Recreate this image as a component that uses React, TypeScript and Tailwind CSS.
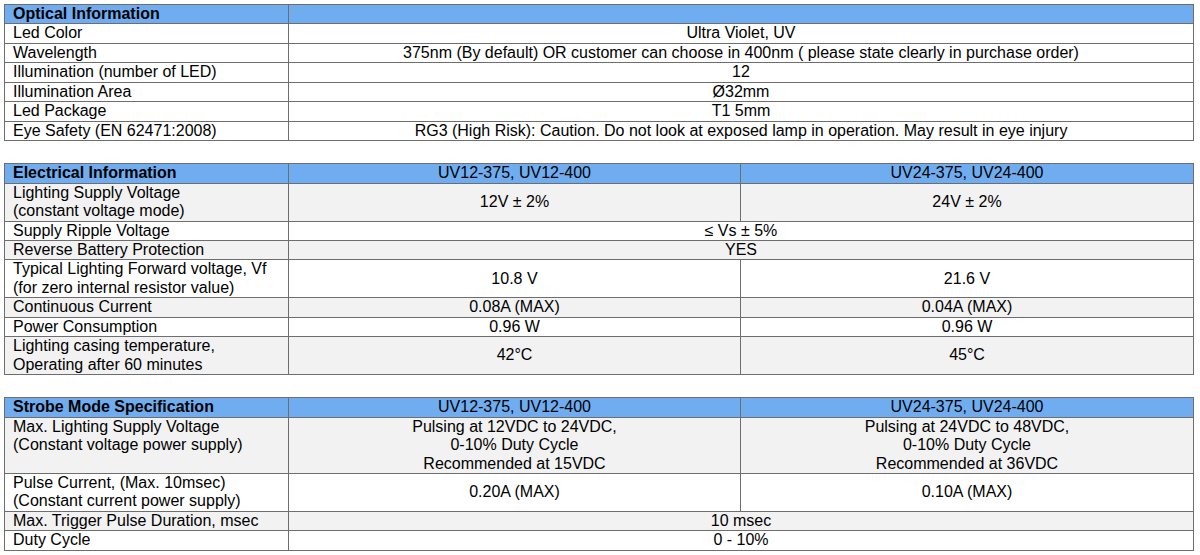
import type { ReactNode } from 'react'

type Row = {
  label: ReactNode
  values: ReactNode[] // one value spans both columns
  shade?: boolean
  labelTop?: boolean
}

const cell = 'border border-[#6e6e6e] px-2 py-0 text-[16px] leading-[18.45px] text-black'

const SpecTable = ({
  title,
  heads,
  rows
}: {
  title: string
  heads: string[]
  rows: Row[]
}) => (
  <table className="w-[1189px] table-fixed border-collapse">
    <colgroup>
      <col className="w-[284px]" />
      {heads.length === 2 ? (
        <>
          <col className="w-[452px]" />
          <col className="w-[453px]" />
        </>
      ) : (
        <col className="w-[905px]" />
      )}
    </colgroup>
    <thead>
      <tr className="bg-[#6fadf0]">
        <th className={`${cell} text-left font-bold`}>{title}</th>
        {heads.length === 0 ? (
          <th className={cell} />
        ) : (
          heads.map((h) => (
            <th key={h} className={`${cell} text-center font-normal`}>
              {h}
            </th>
          ))
        )}
      </tr>
    </thead>
    <tbody>
      {rows.map((r, i) => (
        <tr key={i} className={r.shade ? 'bg-[#f2f2f2]' : 'bg-white'}>
          <td className={`${cell} text-left ${r.labelTop ? 'align-top' : 'align-middle'}`}>{r.label}</td>
          {r.values.length === 1 ? (
            <td colSpan={heads.length === 2 ? 2 : 1} className={`${cell} text-center align-middle`}>
              {r.values[0]}
            </td>
          ) : (
            r.values.map((v, j) => (
              <td key={j} className={`${cell} text-center align-middle`}>
                {v}
              </td>
            ))
          )}
        </tr>
      ))}
    </tbody>
  </table>
)

const optical: Row[] = [
  { label: 'Led Color', values: ['Ultra Violet, UV'] },
  {
    label: 'Wavelength',
    values: ['375nm (By default) OR customer can choose in 400nm ( please state clearly in purchase order)']
  },
  { label: 'Illumination (number of LED)', values: ['12'] },
  { label: 'Illumination Area', values: ['Ø32mm'] },
  { label: 'Led Package', values: ['T1 5mm'] },
  {
    label: 'Eye Safety (EN 62471:2008)',
    values: ['RG3 (High Risk): Caution. Do not look at exposed lamp in operation. May result in eye injury']
  }
]

const electrical: Row[] = [
  {
    label: (
      <>
        Lighting Supply Voltage
        <br />
        (constant voltage mode)
      </>
    ),
    values: ['12V ± 2%', '24V ± 2%'],
    shade: true
  },
  { label: 'Supply Ripple Voltage', values: ['≤ Vs ± 5%'] },
  { label: 'Reverse Battery Protection', values: ['YES'], shade: true },
  {
    label: (
      <>
        Typical Lighting Forward voltage, Vf
        <br />
        (for zero internal resistor value)
      </>
    ),
    values: ['10.8 V', '21.6 V']
  },
  { label: 'Continuous Current', values: ['0.08A (MAX)', '0.04A (MAX)'], shade: true },
  { label: 'Power Consumption', values: ['0.96 W', '0.96 W'] },
  {
    label: (
      <>
        Lighting casing temperature,
        <br />
        Operating after 60 minutes
      </>
    ),
    values: ['42°C', '45°C'],
    shade: true
  }
]

const strobe: Row[] = [
  {
    label: (
      <>
        Max. Lighting Supply Voltage
        <br />
        (Constant voltage power supply)
      </>
    ),
    values: [
      <>
        Pulsing at 12VDC to 24VDC,
        <br />
        0-10% Duty Cycle
        <br />
        Recommended at 15VDC
      </>,
      <>
        Pulsing at 24VDC to 48VDC,
        <br />
        0-10% Duty Cycle
        <br />
        Recommended at 36VDC
      </>
    ],
    shade: true,
    labelTop: true
  },
  {
    label: (
      <>
        Pulse Current, (Max. 10msec)
        <br />
        (Constant current power supply)
      </>
    ),
    values: ['0.20A (MAX)', '0.10A (MAX)']
  },
  { label: 'Max. Trigger Pulse Duration, msec', values: ['10 msec'], shade: true },
  { label: 'Duty Cycle', values: ['0 - 10%'] }
]

export default function App() {
  return (
    <div className="w-[1200px] h-[555px] overflow-hidden bg-white pl-1 pt-1 font-['Liberation_Sans',Arial,sans-serif]">
      <div className="flex flex-col gap-[22px]">
        <SpecTable title="Optical Information" heads={[]} rows={optical} />
        <SpecTable
          title="Electrical Information"
          heads={['UV12-375, UV12-400', 'UV24-375, UV24-400']}
          rows={electrical}
        />
        <SpecTable
          title="Strobe Mode Specification"
          heads={['UV12-375, UV12-400', 'UV24-375, UV24-400']}
          rows={strobe}
        />
      </div>
    </div>
  )
}
